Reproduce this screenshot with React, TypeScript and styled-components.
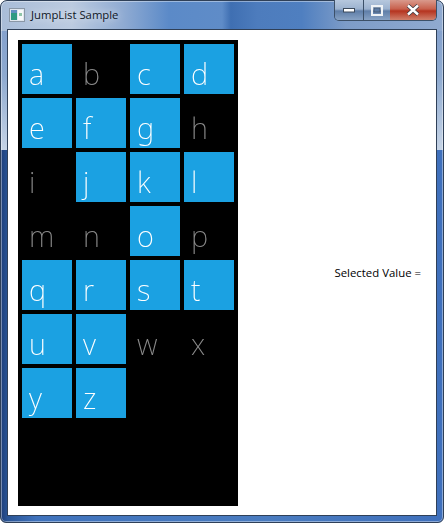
import React from "react";
import styled, { createGlobalStyle } from "styled-components";

const Global = createGlobalStyle`
  html, body { margin: 0; padding: 0; background: #fff; }
  body { width: 444px; height: 523px; overflow: hidden; }
`;

const Frame = styled.div`
  width: 444px;
  height: 523px;
  box-sizing: border-box;
  display: flex;
  flex-direction: column;
  padding: 0 6px 6px 6px;
  border: 1px solid #2f4058;
  border-radius: 7px 7px 6px 6px;
  background:
    linear-gradient(90deg, #a9bdd8 0%, #bccbe0 16%, #8eaad2 28%, #5b8ac8 38%, #5f8cc8 50%, #3f6fb2 52%, #4d7cbd 58%, #4f7fc0 68%, #7d9cc8 78%, #90aad0 100%) top / 100% 30px no-repeat,
    linear-gradient(180deg, #7f9ccb 0%, #8eaad0 50%, #c6d4e6 100%) top / 100% 149px no-repeat,
    linear-gradient(90deg, #1f3f7a 0%, #2a5596 1.5%, #3f72bc 8%, #4a7cc0 60%, #3f70bc 100%);
  box-shadow: inset 0 0 0 1px rgba(255, 255, 255, 0.4);
`;

const TitleBar = styled.div`
  height: 28px;
  flex: none;
  display: flex;
  align-items: flex-start;
  margin-left: 2px;
`;

const AppIcon = styled.svg`
  width: 16px;
  height: 16px;
  margin: 6px 6px 0 0;
  flex: none;
`;

const Title = styled.span`
  margin-top: 4px;
  font: 11.3px/20px "Open Sans", "Liberation Sans", sans-serif;
  color: #10161f;
  text-shadow: 0 0 8px rgba(255, 255, 255, 0.95);
`;

const Caption = styled.div`
  margin-left: auto;
  margin-top: -1px;
  display: flex;
  height: 20px;
  border: 1px solid #3c5068;
  border-top: none;
  border-radius: 0 0 5px 5px;
  overflow: hidden;
`;

const CaptionButton = styled.div<{ $w: number; $close?: boolean }>`
  width: ${(p) => p.$w}px;
  display: flex;
  align-items: center;
  justify-content: center;
  border-left: ${(p) => (p.$close ? "none" : "1px solid #3c5068")};
  background: ${(p) =>
    p.$close
      ? "linear-gradient(180deg, #d99a8c 0%, #c8604c 45%, #b53420 55%, #d0806c 100%)"
      : "linear-gradient(180deg, #b6c8de 0%, #9cb2cf 45%, #5f7ea8 55%, #87a2c4 100%)"};
  &:first-child { border-left: none; }
`;

const Client = styled.div`
  flex: 1;
  display: flex;
  align-items: stretch;
  background: #fff;
  border: 1px solid #2f4058;
  min-height: 0;
`;

const Panel = styled.div`
  width: 220px;
  margin: 10px 0 9px 10px;
  box-sizing: border-box;
  padding: 4px;
  background: #000;
  display: grid;
  grid-template-columns: repeat(4, 50px);
  grid-auto-rows: 50px;
  gap: 4px;
  flex: none;
`;

const Tile = styled.div<{ $on: boolean }>`
  background: ${(p) => (p.$on ? "#1ba1e2" : "transparent")};
  color: ${(p) => (p.$on ? "#fff" : "#8a8a8a")};
  font: 200 29px/1 "Noto Sans", "Open Sans", sans-serif;
  display: flex;
  align-items: flex-end;
  padding: 0 0 6px 7px;
  box-sizing: border-box;
  will-change: transform;
`;

const Side = styled.div`
  flex: 1;
  display: flex;
  align-items: center;
  justify-content: flex-end;
  padding: 0 15px 0 0;
`;

const Selected = styled.span`
  font: 11.4px/16px "Open Sans", "Liberation Sans", sans-serif;
  color: #000;
`;

const active = new Set("acdefgjklkoqrstuvyz".split(""));
const letters = "abcdefghijklmnopqrstuvwxyz".split("");

export default function App() {
  return (
    <>
      <Global />
      <Frame>
        <TitleBar>
          <AppIcon viewBox="0 0 16 16">
            <rect x="0.5" y="1.5" width="15" height="13" fill="#dfe6ee" stroke="#8a97a6" />
            <rect x="2" y="3" width="6" height="10" fill="#2f9a82" />
            <rect x="2" y="3" width="6" height="3" fill="#5f8fc0" />
            <rect x="9" y="3" width="5" height="10" fill="#f7f9fb" />
            <rect x="10" y="6" width="3" height="3" fill="#8fc5a8" />
          </AppIcon>
          <Title>JumpList Sample</Title>
          <Caption>
            <CaptionButton $w={28}>
              <svg width="12" height="5" viewBox="0 0 12 5"><rect x="0.5" y="0.5" width="11" height="3.5" fill="#fff" stroke="#3c4a5c" /></svg>
            </CaptionButton>
            <CaptionButton $w={26}>
              <svg width="12" height="11" viewBox="0 0 12 11"><rect x="1" y="1" width="10" height="9" fill="none" stroke="#eef2f6" strokeWidth="2" /><rect x="3" y="3" width="6" height="4" fill="#5d7ca6" stroke="#3c4a5c" strokeWidth="0.6" /></svg>
            </CaptionButton>
            <CaptionButton $w={46} $close>
              <svg width="14" height="12" viewBox="0 0 14 12"><path d="M2 1.5 L12 10.5 M12 1.5 L2 10.5" stroke="#3c3c44" strokeWidth="4" /><path d="M2 1.5 L12 10.5 M12 1.5 L2 10.5" stroke="#fff" strokeWidth="2.4" /></svg>
            </CaptionButton>
          </Caption>
        </TitleBar>
        <Client>
          <Panel>
            {letters.map((l) => (
              <Tile key={l} $on={active.has(l)}>{l}</Tile>
            ))}
          </Panel>
          <Side>
            <Selected>Selected Value =</Selected>
          </Side>
        </Client>
      </Frame>
    </>
  );
}
